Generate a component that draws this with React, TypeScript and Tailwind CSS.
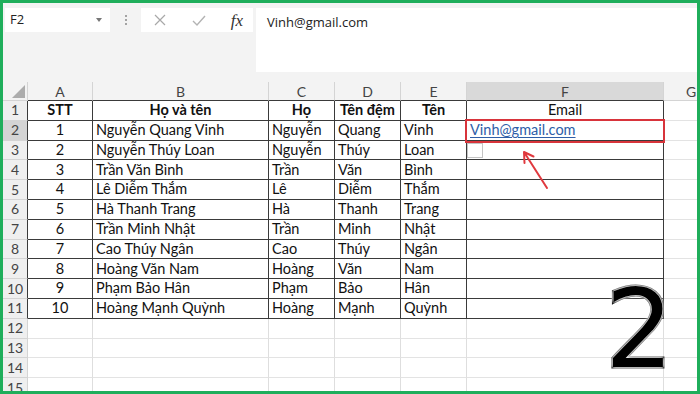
import React from "react";

const rows = [
  ["1", "Nguyễn Quang Vinh", "Nguyễn", "Quang", "Vinh"],
  ["2", "Nguyễn Thúy Loan", "Nguyễn", "Thúy", "Loan"],
  ["3", "Trần Văn Bình", "Trần", "Văn", "Bình"],
  ["4", "Lê Diễm Thắm", "Lê", "Diễm", "Thắm"],
  ["5", "Hà Thanh Trang", "Hà", "Thanh", "Trang"],
  ["6", "Trần Minh Nhật", "Trần", "Minh", "Nhật"],
  ["7", "Cao Thúy Ngân", "Cao", "Thúy", "Ngân"],
  ["8", "Hoàng Văn Nam", "Hoàng", "Văn", "Nam"],
  ["9", "Phạm Bảo Hân", "Phạm", "Bảo", "Hân"],
  ["10", "Hoàng Mạnh Quỳnh", "Hoàng", "Mạnh", "Quỳnh"],
];

// widths incl. right border: row header, A, B, C, D, E, F
const widths = ["w-[25px]", "w-[65px]", "w-[176px]", "w-[66px]", "w-[66px]", "w-[66px]", "w-[197px]"];

const Toolbar = () => (
  <div className="h-[79px] bg-[#f3f3f3] flex items-start pt-[5px] pl-[2px] font-['Open_Sans',sans-serif] text-[13px] text-[#222]">
    {/* name box */}
    <div className="w-[105px] h-[24px] bg-white flex items-center justify-between pl-[5px] pr-[8px]">
      <span>F2</span>
      <span className="w-0 h-0 border-l-[3px] border-r-[3px] border-t-[4px] border-l-transparent border-r-transparent border-t-[#777]" />
    </div>
    <div className="w-[31px] h-[24px] flex flex-col items-center justify-center gap-[2px]">
      <span className="w-[2px] h-[2px] bg-[#888] rounded-full" />
      <span className="w-[2px] h-[2px] bg-[#888] rounded-full" />
      <span className="w-[2px] h-[2px] bg-[#888] rounded-full" />
    </div>
    {/* cancel / enter / fx */}
    <div className="w-[112px] h-[24px] bg-white flex items-center justify-between pl-[12px] pr-[10px]">
      <svg width="14" height="14" viewBox="0 0 14 14">
        <path d="M2 2 L12 12 M12 2 L2 12" stroke="#a8a8a8" strokeWidth="1.2" />
      </svg>
      <svg width="16" height="14" viewBox="0 0 16 14">
        <path d="M2 8 L6 12 L14 3" stroke="#b3b3b3" strokeWidth="1.4" fill="none" />
      </svg>
      <span className="font-['Liberation_Serif',serif] italic text-[17px] text-[#333] leading-none">fx</span>
    </div>
    {/* formula bar */}
    <div className="ml-[3px] flex-1 h-[64px] bg-white pl-[11px] pt-[5px]">Vinh@gmail.com</div>
  </div>
);

const HeaderRow = () => {
  const letters = ["A", "B", "C", "D", "E", "F"];
  return (
    <div className="flex h-[19px] bg-[#f3f3f3] text-[14px] text-[#444]">
      <div className={`${widths[0]} shrink-0 relative border-r border-b border-r-[#d4d4d4] border-b-[#d4d4d4]`}>
        {/* select-all corner triangle */}
        <span className="absolute right-[2px] bottom-[2px] block w-0 h-0 border-solid border-l-[13px] border-b-[13px] border-l-transparent border-b-[#acacac]" />
      </div>
      {letters.map((l, i) => (
        <div
          key={l}
          className={`${widths[i + 1]} shrink-0 flex items-center justify-center border-r border-b border-r-[#d4d4d4] border-b-[#3a3a3a] ${l === "F" ? "bg-[#d9d9d9]" : ""}`}
        >
          {l}
        </div>
      ))}
      <div className="flex-1 flex items-center pl-[22px] border-b border-b-[#d4d4d4]">G</div>
    </div>
  );
};

const Row = ({ n, cells, bold, link }: { n: number; cells: string[] | null; bold?: boolean; link?: boolean }) => {
  const inTable = cells !== null;
  const grid = inTable ? "border-r-[#3a3a3a] border-b-[#3a3a3a]" : "border-r-[#dedede] border-b-[#e3e3e3]";
  return (
    <div className="flex h-[19.8px] text-[14.5px] text-[#111] leading-none">
      <div
        className={`${widths[0]} shrink-0 flex items-center justify-center text-[#444] text-[14px] border-r border-b border-b-[#d4d4d4] ${
          inTable ? "border-r-[#3a3a3a]" : "border-r-[#d4d4d4]"
        } ${n === 2 ? "bg-[#d4d4d4]" : "bg-[#efefef]"}`}
      >
        {n}
      </div>
      {[0, 1, 2, 3, 4, 5].map((i) => {
        const v = cells ? cells[i] ?? "" : "";
        const center = i === 0 || bold;
        return (
          <div
            key={i}
            className={`${widths[i + 1]} shrink-0 flex items-center border-r border-b ${grid} ${
              center ? "justify-center" : "pl-[3px]"
            } ${bold && i < 5 ? "font-bold" : ""}`}
          >
            {i === 5 && link ? (
              <span className="text-[#2f5ea8] underline underline-offset-2">{v}</span>
            ) : (
              v
            )}
          </div>
        );
      })}
      <div className="flex-1 border-b border-b-[#e3e3e3]" />
    </div>
  );
};

export default function App() {
  return (
    <div className="w-[700px] h-[394px] border-[3px] border-[#1fae5b] bg-white overflow-hidden relative font-['Lato',sans-serif]">
      <Toolbar />
      <HeaderRow />
      <Row n={1} cells={["STT", "Họ và tên", "Họ", "Tên đệm", "Tên", "Email"]} bold />
      {rows.map((r, i) => (
        <Row key={i} n={i + 2} cells={i === 0 ? [...r, "Vinh@gmail.com"] : r} link={i === 0} />
      ))}
      {[12, 13, 14, 15].map((n) => (
        <Row key={n} n={n} cells={null} />
      ))}

      {/* selection highlight on F2 */}
      <div className="absolute left-[462px] top-[116px] w-[200px] h-[24px] border-2 border-[#d8343b]" />
      {/* flash fill square */}
      <div className="absolute left-[464px] top-[140px] w-[16px] h-[15px] bg-white border border-[#c4c4c4]" />
      {/* arrow */}
      <svg className="absolute left-[512px] top-[144px]" width="40" height="46" viewBox="0 0 40 46">
        <path d="M9 5 L32 41 M9 5 L9.5 16 M9 5 L18.5 9.5" stroke="#e0393e" strokeWidth="2" fill="none" strokeLinecap="round" />
      </svg>
      {/* step number */}
      <div className="absolute left-[602px] top-[273px] font-['DejaVu_Sans',sans-serif] text-[108px] leading-none text-black [-webkit-text-stroke:3px_black] [paint-order:stroke] [text-shadow:0_0_4px_white,0_0_3px_white,0_0_2px_white]">
        2
      </div>
    </div>
  );
}
